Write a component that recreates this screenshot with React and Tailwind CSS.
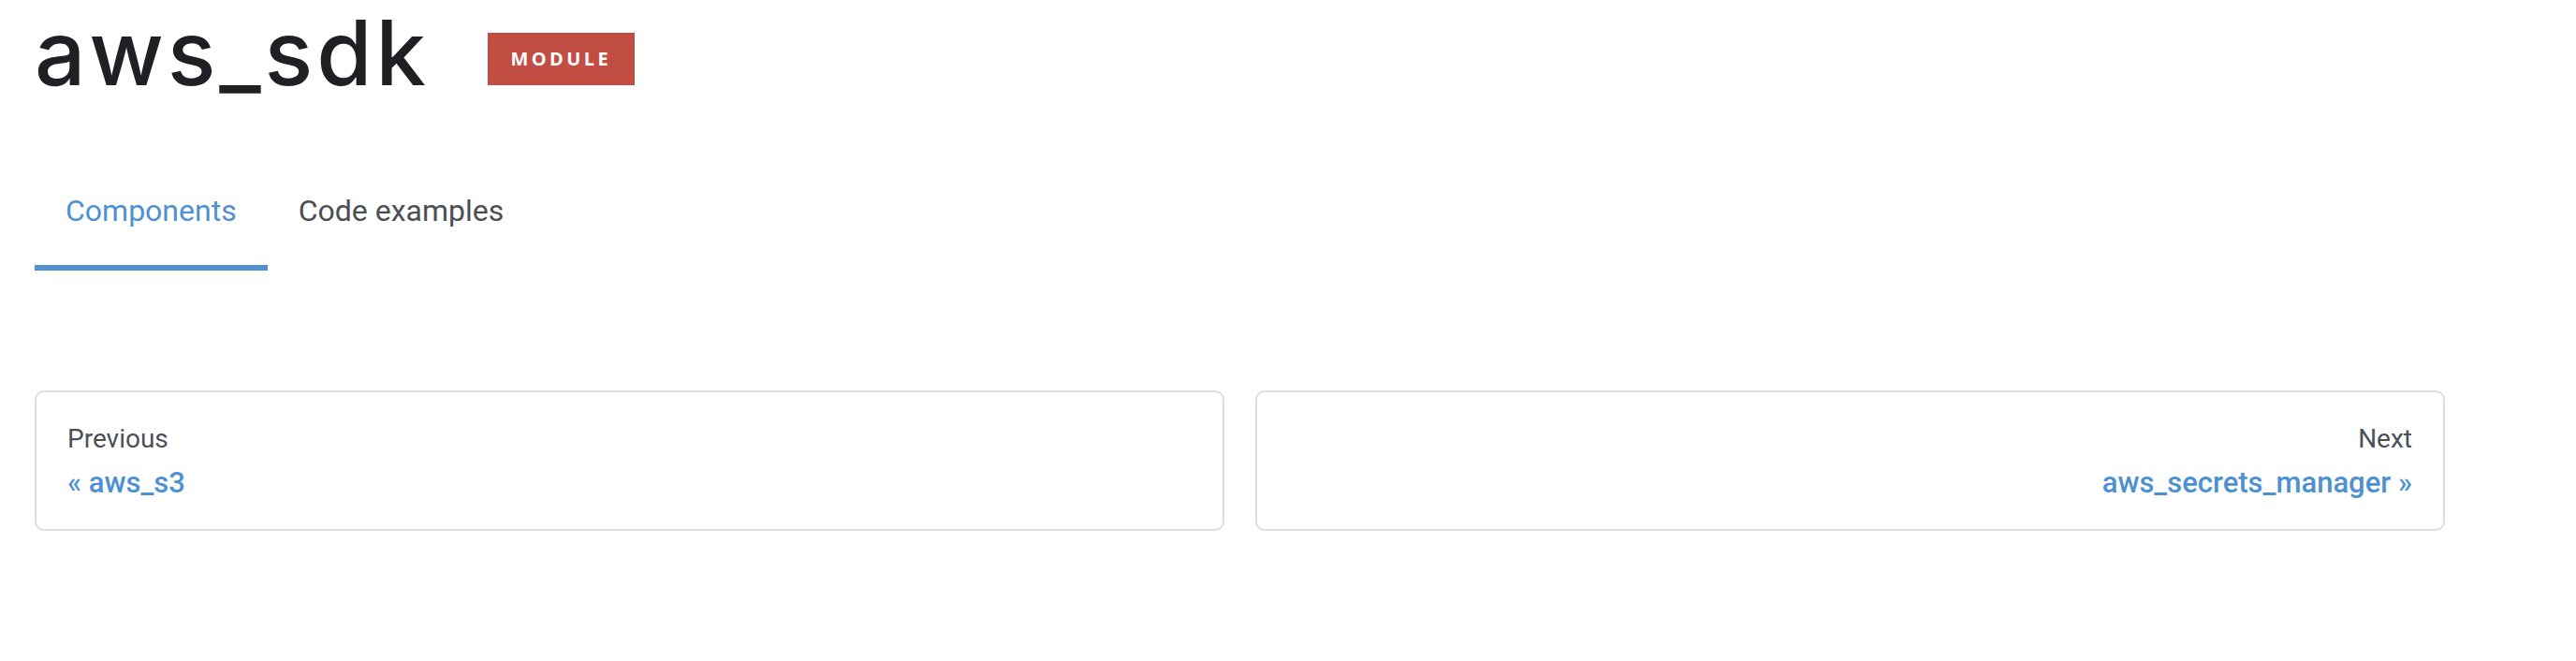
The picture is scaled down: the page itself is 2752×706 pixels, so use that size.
import React from "react";

const tabs = [
  { label: "Components", active: true },
  { label: "Code examples", active: false },
];

const PagerCard = ({ label, title, align }) => (
  <a
    href="#"
    className={`block border-2 border-[#dcdde0] rounded-[10px] px-[33px] pt-[30px] pb-[28px] ${
      align === "right" ? "text-right" : "text-left"
    }`}
  >
    <div className="text-[28px] leading-[39px] text-[#4b5058]">{label}</div>
    <div className="mt-[7px] text-[31px] leading-[42px] font-medium text-[#4e91d1]">{title}</div>
  </a>
);

const App = () => {
  return (
    <div className="bg-white pl-[37px] pr-[140px] font-['Roboto',sans-serif]">
      {/* Header */}
      <div className="flex items-start">
        <h1 className="mt-[8px] text-[96px] leading-[96px] font-medium tracking-[0.04em] text-[#1f2023] font-['Inter',sans-serif]">
          aws_sdk
        </h1>
        <span className="ml-[62px] mt-[35px] flex h-[56px] w-[157px] items-center justify-center bg-[#c24d43] text-[20px] font-bold tracking-[0.17em] text-white font-['Open_Sans',sans-serif]">
          MODULE
        </span>
      </div>

      {/* Tabs */}
      <div className="mt-[64px] flex">
        {tabs.map((tab) => (
          <button
            key={tab.label}
            className={`px-[33px] pt-[35px] pb-[35px] text-[32px] leading-[45px] border-b-[6px] ${
              tab.active ? "border-[#5191cf] text-[#4e91d1]" : "border-transparent text-[#4a4e55]"
            }`}
          >
            {tab.label}
          </button>
        ))}
      </div>

      {/* Prev / Next */}
      <div className="mt-[128px] grid grid-cols-2 gap-[33px]">
        <PagerCard label="Previous" title="« aws_s3" align="left" />
        <PagerCard label="Next" title="aws_secrets_manager »" align="right" />
      </div>
    </div>
  );
};

export default App;
